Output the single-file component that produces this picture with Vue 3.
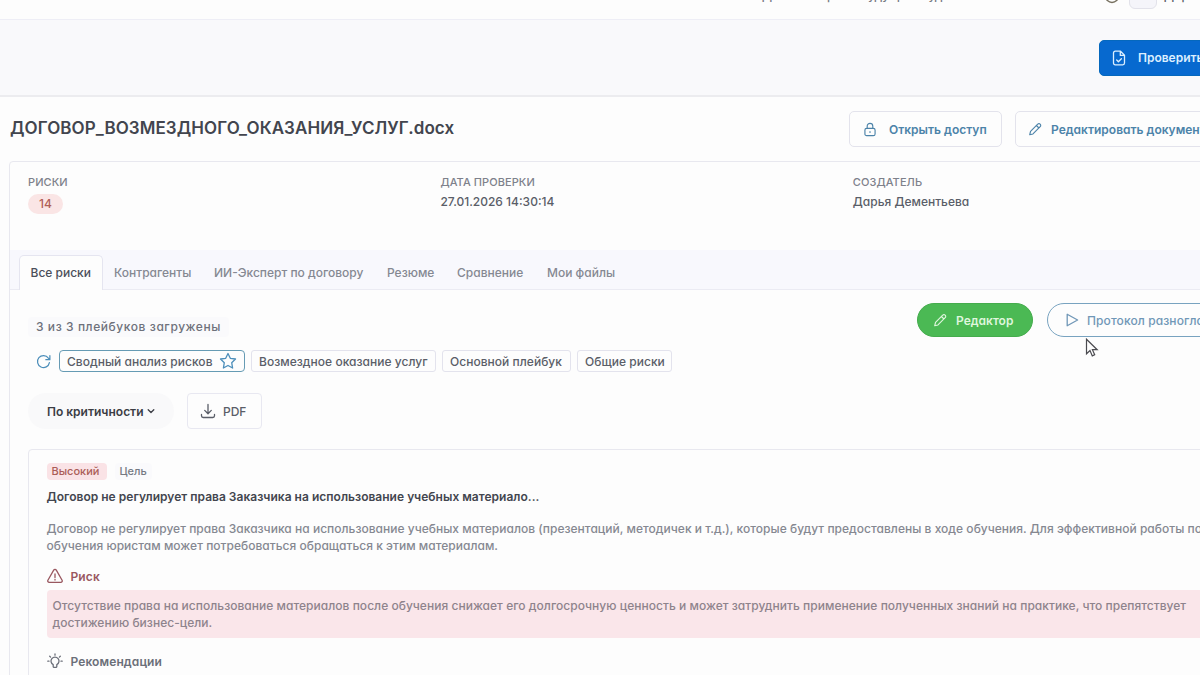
<script setup>
import { ref } from 'vue';

const activeTab = ref('Все риски');
const tabs = [
  { name: 'Все риски', width: 84 },
  { name: 'Контрагенты', width: 100 },
  { name: 'ИИ-Эксперт по договору', width: 173 },
  { name: 'Резюме', width: 70 },
  { name: 'Сравнение', width: 90 },
  { name: 'Мои файлы', width: 92 },
];

const activeBook = ref('Сводный анализ рисков');
const playbooks = [
  { name: 'Сводный анализ рисков', width: 186 },
  { name: 'Возмездное оказание услуг', width: 185 },
  { name: 'Основной плейбук', width: 129 },
  { name: 'Общие риски', width: 95 },
];
</script>

<template>
  <div class="page">
    <header class="topbar">
      <span class="top-title">Дата или время будущего суда</span>
      <svg class="top-icon" viewBox="0 0 16 16"><circle cx="8" cy="8" r="6.5" /></svg>
      <span class="top-badge"></span>
      <span class="top-user">Дарья</span>
    </header>

    <div class="toolbar">
      <button class="check-btn">
        <svg class="icon" viewBox="0 0 16 16">
          <path d="M9.5 1.2H4.2a1.7 1.7 0 0 0-1.7 1.7v10.2a1.7 1.7 0 0 0 1.7 1.7h7.6a1.7 1.7 0 0 0 1.7-1.7V5.2zM9.3 1.4v4h4M5.7 10l1.7 1.7 3-3" />
        </svg>
        <span>Проверить</span>
      </button>
    </div>

    <div class="doc-head">
      <h1>ДОГОВОР_ВОЗМЕЗДНОГО_ОКАЗАНИЯ_УСЛУГ.docx</h1>
      <button class="outline-btn access">
        <svg class="icon lock" viewBox="0 0 16 16">
          <rect x="2.2" y="6.7" width="11.6" height="8.3" rx="2" />
          <path d="M4.8 6.5V4.2a3.2 3.2 0 0 1 6.4 0v2.3M8 10.3v1" />
        </svg>
        <span>Открыть доступ</span>
      </button>
      <button class="outline-btn edit">
        <svg class="icon pencil" viewBox="0 0 16 16">
          <path d="M2 14l.9-3.8 8.2-8.3a1.9 1.9 0 0 1 2.8 0 1.9 1.9 0 0 1 0 2.8l-8.2 8.4zM9.6 3.4l2.9 2.9" />
        </svg>
        <span>Редактировать документ</span>
      </button>
    </div>

    <main class="panel">
      <section class="info">
        <div class="info-col">
          <span class="label">РИСКИ</span>
          <span class="count">14</span>
        </div>
        <div class="info-col">
          <span class="label">ДАТА ПРОВЕРКИ</span>
          <span class="value">27.01.2026 14:30:14</span>
        </div>
        <div class="info-col">
          <span class="label">СОЗДАТЕЛЬ</span>
          <span class="value">Дарья Дементьева</span>
        </div>
      </section>

      <nav class="tabs">
        <div
          v-for="tab in tabs"
          :key="tab.name"
          class="tab"
          :class="{ active: tab.name === activeTab }"
          :style="{ width: tab.width + 'px' }"
          @click="activeTab = tab.name"
        >
          {{ tab.name }}
        </div>
      </nav>

      <section class="content">
        <div class="actions">
          <span class="status">3 из 3 плейбуков загружены</span>
          <button class="pill editor">
            <svg class="icon pencil" viewBox="0 0 16 16">
              <path d="M2 14l.9-3.8 8.2-8.3a1.9 1.9 0 0 1 2.8 0 1.9 1.9 0 0 1 0 2.8l-8.2 8.4zM9.6 3.4l2.9 2.9" />
            </svg>
            <span>Редактор</span>
          </button>
          <button class="pill protocol">
            <svg class="icon" viewBox="0 0 16 16"><path d="M3.2 2.2v11.6L13.6 8z" /></svg>
            <span>Протокол разногласий</span>
          </button>
        </div>

        <div class="books">
          <svg class="icon refresh" viewBox="0 0 16 16">
            <path d="M14.3 9.2A6.4 6.4 0 1 1 13.2 4.3L14.7 6M14.8 1.7V6h-4.3" />
          </svg>
          <div
            v-for="book in playbooks"
            :key="book.name"
            class="book"
            :class="{ active: book.name === activeBook }"
            :style="{ width: book.width + 'px' }"
            @click="activeBook = book.name"
          >
            <span>{{ book.name }}</span>
            <svg v-if="book.name === activeBook" class="icon star" viewBox="0 0 18 18">
              <path d="M9 1.5l2.3 4.8 5.2.7-3.8 3.7.9 5.3L9 13.5 4.4 16l.9-5.3L1.5 7l5.2-.7z" />
            </svg>
          </div>
        </div>

        <div class="filters">
          <button class="sort">
            <span>По критичности</span>
            <svg class="icon chevron" viewBox="0 0 8 8"><path d="M1.2 2.7L4 5.5l2.8-2.8" /></svg>
          </button>
          <button class="pdf">
            <svg class="icon" viewBox="0 0 16 16">
              <path d="M8 1.5v9M4.7 7.4L8 10.7l3.3-3.3M1.5 11.5v1.3c0 1 .7 1.7 1.7 1.7h9.6c1 0 1.7-.7 1.7-1.7v-1.3" />
            </svg>
            <span>PDF</span>
          </button>
        </div>

        <article class="card">
          <div class="tags">
            <span class="tag high">Высокий</span>
            <span class="tag goal">Цель</span>
          </div>
          <h2>Договор не регулирует права Заказчика на использование учебных материало...</h2>
          <p class="desc">
            Договор не регулирует права Заказчика на использование учебных материалов (презентаций, методичек и т.д.), которые будут предоставлены в ходе обучения. Для эффективной работы после<br />
            обучения юристам может потребоваться обращаться к этим материалам.
          </p>
          <h3 class="risk-title">
            <svg class="icon" viewBox="0 0 16 16">
              <path d="M6.7 2.1L.9 12.2a1.5 1.5 0 0 0 1.3 2.2h11.600a1.5 1.5 0 0 0 1.3-2.2L9.3 2.1a1.5 1.5 0 0 0-2.6 0zM8 6v3.5M8 11.5v.6" />
            </svg>
            <span>Риск</span>
          </h3>
          <p class="risk-text">
            Отсутствие права на использование материалов после обучения снижает его долгосрочную ценность и может затруднить применение полученных знаний на практике, что препятствует<br />
            достижению бизнес-цели.
          </p>
          <h3 class="advice-title">
            <svg class="icon bulb" viewBox="0 0 16 16">
              <path d="M6.2 11.7a4 4 0 1 1 3.6 0v1.7a1 1 0 0 1-1 1H7.2a1 1 0 0 1-1-1zM8 1v1.200M2.700 3.200l.9.9M13.300 3.200l-.9.9M.8 8.200H2M14 8.200h1.200" />
            </svg>
            <span>Рекомендации</span>
          </h3>
        </article>
      </section>
    </main>

    <svg class="cursor" viewBox="0 0 14 20">
      <path d="M1.5 1.2v14.6l3.5-3.2 2.3 5.3 2.4-1.1-2.3-5.1h4.8z" />
    </svg>
  </div>
</template>

<style>
body {
  overflow: hidden;
}
</style>

<style scoped>
* {
  box-sizing: border-box;
  white-space: nowrap;
}

.page {
  position: relative;
  width: 1200px;
  height: 675px;
  overflow: hidden;
  background: #fdfdfd;
  color: #5a5e68;
  font-family: Inter, "Liberation Sans", sans-serif;
  font-size: 12px;
  font-weight: 500;
  font-feature-settings: "cv11";
}

button {
  display: flex;
  align-items: center;
  flex: none;
  margin: 0;
  padding: 0;
  font: inherit;
  font-feature-settings: inherit;
  color: inherit;
  background: none;
}

h1,
h2,
h3,
p {
  margin: 0;
}

.icon {
  flex: none;
  width: 16px;
  height: 16px;
  fill: none;
  stroke: currentColor;
  stroke-width: 1.3;
  stroke-linecap: round;
  stroke-linejoin: round;
}

.lock,
.pencil {
  width: 14px;
  height: 15px;
  margin: 0 1px;
}

.topbar {
  display: flex;
  height: 20px;
  padding-left: 762px;
  border-bottom: 1px solid #eeeef6;
  overflow: hidden;
  line-height: 16px;
}

.top-title {
  flex: none;
  width: 342px;
  margin-top: -12px;
  color: #777a84;
}

.top-icon {
  flex: none;
  width: 16px;
  height: 16px;
  margin-top: -12px;
  fill: none;
  stroke: #77705f;
  stroke-width: 1.4;
}

.top-badge {
  flex: none;
  width: 28px;
  height: 20px;
  margin: -11px 7px 0 9px;
  border: 1px solid #e2e2ea;
  border-radius: 6px;
  background: #f5f5fa;
}

.top-user {
  margin-top: -12px;
}

.toolbar {
  display: flex;
  height: 77px;
  padding: 20px 0 0 1099px;
  background: #f9f9fb;
  border-bottom: 2px solid #ececef;
}

.check-btn {
  width: 190px;
  height: 36px;
  padding: 0 0 1px 11px;
  gap: 11px;
  border: 1px solid #0568bd;
  border-radius: 5px;
  background: #0769cf;
  color: #dcefff;
  font-weight: 600;
}

.doc-head {
  display: flex;
  height: 64px;
  padding: 14px 0 0 10px;
}

h1 {
  flex: none;
  width: 839px;
  padding-top: 6px;
  font-size: 17px;
  font-weight: 600;
  line-height: 22px;
  letter-spacing: 0.08px;
  color: #42454e;
}

.outline-btn {
  height: 36px;
  border: 1px solid #e3e3ec;
  border-radius: 5px;
  color: #4c83a9;
  font-weight: 600;
}

.access {
  width: 153px;
  padding-left: 12px;
  gap: 11px;
  margin-right: 13px;
}

.edit {
  width: 200px;
  padding-left: 11px;
  gap: 8px;
}

.panel {
  width: 1230px;
  height: 530px;
  margin-left: 9px;
  border: 1px solid #e8e8ef;
  border-radius: 4px 0 0;
}

.info {
  display: flex;
  height: 88px;
  padding: 12px 0 0 18px;
}

.info-col {
  display: flex;
  flex: none;
  flex-direction: column;
  align-items: flex-start;
  width: 412.4px;
}

.label {
  font-size: 11px;
  line-height: 16px;
  letter-spacing: 0.08px;
  color: #7e818b;
}

.count {
  width: 35px;
  height: 20px;
  margin-top: 4px;
  border-radius: 10px;
  background: #fae5e5;
  color: #b15f57;
  line-height: 20px;
  text-align: center;
}

.value {
  margin-top: 4px;
  line-height: 16px;
}

.tabs {
  display: flex;
  align-items: flex-end;
  height: 40px;
  padding-left: 9px;
  background: #f8f8fd;
  border-bottom: 1px solid #ebebf3;
}

.tab {
  flex: none;
  height: 34px;
  padding-left: 10px;
  border: 1px solid transparent;
  border-bottom: 0;
  line-height: 33px;
  color: #858892;
}

.tab.active {
  height: 35px;
  margin-bottom: -1px;
  padding-left: 10.5px;
  border-color: #e5e5f0;
  border-radius: 5px 5px 0 0;
  background: #fdfdfd;
  color: #4b4f5a;
}

.content {
  padding: 13px 0 0 18px;
}

.actions {
  display: flex;
  height: 34px;
}

.status {
  flex: none;
  align-self: flex-end;
  height: 20px;
  width: 201px;
  margin-right: 688px;
  padding-left: 8px;
  border-radius: 4px;
  background: #fafafc;
  line-height: 20px;
  letter-spacing: 0.57px;
  color: #6e717b;
}

.pill {
  height: 34px;
  border-radius: 17px;
}

.editor {
  width: 116px;
  margin-right: 14px;
  padding-left: 14px;
  gap: 8px;
  border: 1px solid #45ac4d;
  background: #4bb954;
  color: #dff6dd;
  font-weight: 600;
}

.protocol {
  width: 200px;
  padding-left: 16px;
  gap: 7px;
  border: 1px solid #78a3c0;
  color: #7097b7;
  letter-spacing: 0.1px;
}

.books {
  display: flex;
  align-items: center;
  height: 22px;
  margin-top: 13px;
  padding-left: 8px;
}

.refresh {
  width: 15px;
  height: 15px;
  margin-right: 8px;
  color: #4c8eba;
}

.book {
  display: flex;
  flex: none;
  align-items: center;
  height: 22px;
  margin-right: 6px;
  padding-left: 7px;
  border: 1px solid #e3e3ed;
  border-radius: 3px;
  letter-spacing: 0.03px;
}

.book.active {
  border-color: #669bb4;
  border-radius: 4px;
}

.star {
  width: 18px;
  height: 18px;
  margin-left: 6px;
  color: #4c8eba;
}

.filters {
  display: flex;
  height: 36px;
  margin-top: 21px;
}

.sort {
  width: 146px;
  padding-left: 19px;
  border: 0;
  border-radius: 18px;
  background: #f9f9fa;
  color: #3b3d44;
  font-weight: 600;
}

.chevron {
  width: 8px;
  height: 8px;
  margin-left: 3px;
}

.pdf {
  width: 75px;
  margin-left: 13px;
  padding-left: 12px;
  gap: 7px;
  border: 1px solid #e8e8f1;
  border-radius: 4px;
}

.card {
  height: 260px;
  margin-top: 20px;
  padding: 13px 0 0 17.5px;
  border: 1px solid #e8e8ef;
  border-radius: 4px 0 0;
}

.tags {
  display: flex;
  gap: 8px;
  height: 17px;
  font-size: 11px;
  line-height: 17px;
}

.tag {
  padding: 0 5px;
  border-radius: 4px;
}

.high {
  width: 60px;
  background: #fae3e6;
  color: #ab5d57;
}

.goal {
  background: #fafafc;
  color: #757983;
}

h2 {
  margin-top: 8px;
  font-size: 12px;
  font-weight: 600;
  line-height: 18px;
  letter-spacing: 0.015px;
  color: #43464f;
  font-feature-settings: normal;
}

.desc {
  margin-top: 14px;
  line-height: 17px;
  letter-spacing: 0.022px;
  color: #858891;
}

h3 {
  display: flex;
  align-items: center;
  gap: 8px;
  height: 20px;
  font-size: 12px;
  font-weight: 600;
  letter-spacing: 0.1px;
}

.risk-title {
  margin-top: 12px;
  color: #99575f;
}

.risk-text {
  height: 48px;
  margin-top: 4px;
  padding: 6.5px 0 0 6px;
  border-radius: 4px 0 0 4px;
  background: #fae6ea;
  line-height: 17.5px;
  letter-spacing: 0.03px;
  color: #8e838c;
}

.advice-title {
  margin-top: 13px;
  color: #6b6f79;
}

.cursor {
  position: absolute;
  left: 1085px;
  top: 338px;
  width: 14px;
  height: 20px;
  fill: #fdfdfd;
  stroke: #4b4b50;
  stroke-width: 1.2;
}
</style>
